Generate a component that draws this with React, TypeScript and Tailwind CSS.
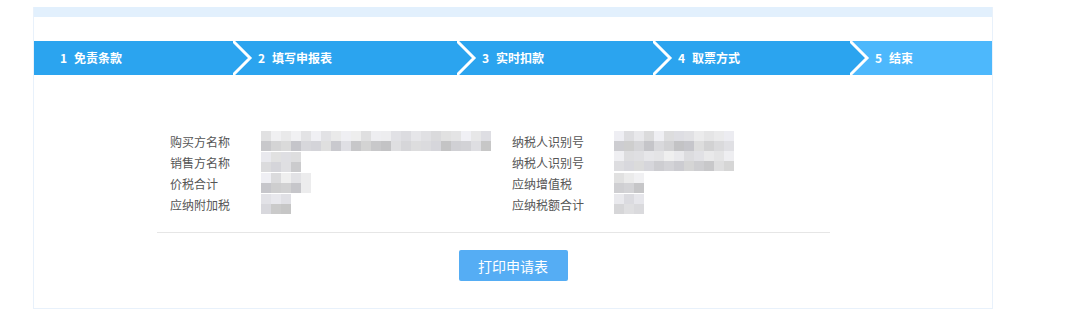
import React from "react";

const FONT = '"Noto Sans CJK SC", "Noto Sans", sans-serif';

function rnd(seed: number) {
  let s = seed;
  return () => {
    s = (s * 9301 + 49297) % 233280;
    return s / 233280;
  };
}

function Mosaic({ cols, rows, seed, fadeLast = false }: { cols: number; rows: number; seed: number; fadeLast?: boolean }) {
  const r = rnd(seed);
  const cells: React.ReactNode[] = [];
  for (let y = 0; y < rows; y++) {
    for (let x = 0; x < cols; x++) {
      const dark = y % 2 === 1;
      let l = dark ? 195 + Math.floor(r() * 30) : 218 + Math.floor(r() * 24);
      if (fadeLast && x === cols - 1) l = Math.max(l, 236);
      const b = Math.min(255, l + Math.floor(r() * 6));
      cells.push(
        <div key={`${x}-${y}`} style={{ backgroundColor: `rgb(${l},${l},${b})` }} className="w-[10px] h-[10px]" />
      );
    }
  }
  return (
    <div className="grid" style={{ gridTemplateColumns: `repeat(${cols}, 10px)` }}>
      {cells}
    </div>
  );
}

const steps = [
  { n: 1, t: "免责条款", w: "w-[199px]", light: false },
  { n: 2, t: "填写申报表", w: "w-[224px]", light: false },
  { n: 3, t: "实时扣款", w: "w-[196px]", light: false },
  { n: 4, t: "取票方式", w: "w-[197px]", light: false },
  { n: 5, t: "结束", w: "w-[142px]", light: true },
];

function Chevron() {
  return (
    <svg className="absolute left-0 top-0" width="22" height="34" viewBox="0 0 22 34">
      <polygon points="0,0 17,17 0,34" fill="#2ba4ef" />
      <polyline points="-1,-1 17,17 -1,35" fill="none" stroke="#ffffff" strokeWidth="3" />
    </svg>
  );
}

function Row({ label, children, lw }: { label: string; children: React.ReactNode; lw: string }) {
  return (
    <div className="flex h-[21px]">
      <div className={`${lw} text-[12px] leading-[21px] text-[#555]`}>{label}</div>
      <div>{children}</div>
    </div>
  );
}

export default function App() {
  return (
    <div className="w-[1080px] h-[310px] bg-white pt-[7px] pl-[33px]" style={{ fontFamily: FONT }}>
      <div className="w-[960px] h-[302px] border-x border-b border-[#e8f1fb] flex flex-col">
        <div className="h-[10px] bg-[#e2f0fd]" />
        <div className="h-[24px]" />
        <div className="flex h-[34px]">
          {steps.map((s, i) => (
            <div
              key={s.n}
              className={`${s.w} relative h-[34px] flex items-center ${s.light ? "bg-[#4db8fc]" : "bg-[#2ba4ef]"} ${i === 0 ? "pl-[26px]" : "pl-[25px]"}`}
            >
              {i > 0 && <Chevron />}
              <span className="relative text-white font-bold text-[12px] leading-none">
                {s.n}
                <span className="ml-[7px]">{s.t}</span>
              </span>
            </div>
          ))}
        </div>
        <div className="flex pt-[56px] pl-[136px]">
          <div className="w-[342px]">
            <Row label="购买方名称" lw="w-[91px]"><Mosaic cols={23} rows={2} seed={3} /></Row>
            <Row label="销售方名称" lw="w-[91px]"><Mosaic cols={4} rows={2} seed={11} /></Row>
            <Row label="价税合计" lw="w-[91px]"><Mosaic cols={5} rows={2} seed={17} fadeLast /></Row>
            <Row label="应纳附加税" lw="w-[91px]"><Mosaic cols={3} rows={2} seed={29} /></Row>
          </div>
          <div>
            <div className="flex h-[42px]">
              <div className="w-[102px] text-[12px] text-[#555]">
                <div className="leading-[21px]">纳税人识别号</div>
                <div className="leading-[21px]">纳税人识别号</div>
              </div>
              <div><Mosaic cols={12} rows={4} seed={41} /></div>
            </div>
            <Row label="应纳增值税" lw="w-[102px]"><Mosaic cols={3} rows={2} seed={53} /></Row>
            <Row label="应纳税额合计" lw="w-[102px]"><Mosaic cols={3} rows={2} seed={61} /></Row>
          </div>
        </div>
        <div className="ml-[123px] w-[673px] h-px bg-[#e6e6e6] mt-[17px]" />
        <div className="flex justify-center mt-[17px]">
          <button className="w-[109px] h-[31px] rounded-[2px] bg-[#55adf4] text-white text-[14px] leading-none">
            打印申请表
          </button>
        </div>
      </div>
    </div>
  );
}
